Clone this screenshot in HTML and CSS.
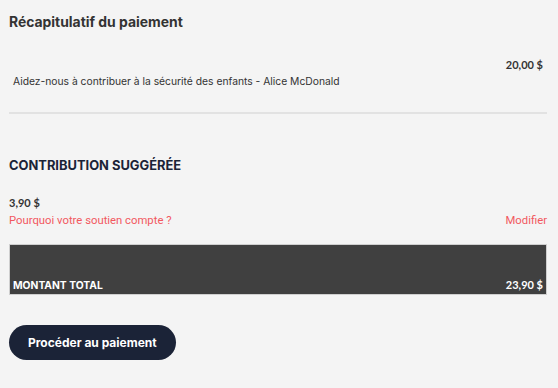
FILE: index.html
```html
<!DOCTYPE html>
<html lang="fr">
<head>
<meta charset="utf-8">
<link rel="stylesheet" href="styles.css">
</head>
<body>
<div class="page">
  <h2 class="title">Récapitulatif du paiement</h2>
  <div class="item">
    <div class="item-amount">20,00 $</div>
    <div class="item-desc">Aidez-nous à contribuer à la sécurité des enfants - Alice McDonald</div>
  </div>
  <hr class="divider">
  <h3 class="section">CONTRIBUTION SUGGÉRÉE</h3>
  <div class="tip-amount">3,90 $</div>
  <div class="tip-links">
    <a class="link">Pourquoi votre soutien compte ?</a>
    <a class="link">Modifier</a>
  </div>
  <div class="total">
    <span class="total-label">MONTANT TOTAL</span>
    <span class="total-amount">23,90 $</span>
  </div>
  <button class="pay">Procéder au paiement</button>
</div>
</body>
</html>
```
FILE: styles.css
```css
html, body {
  margin: 0;
  padding: 0;
  background: #f4f4f4;
}
.page {
  padding: 0 11px 0 9px;
  font-family: Inter, sans-serif;
  color: #333;
}
.title {
  margin: 0;
  padding-top: 14px;
  font-size: 13.9px;
  font-weight: 700;
  line-height: 17px;
  color: #333;
}
.item {
  display: flex;
  flex-direction: column;
  padding: 0 4px;
  margin-top: 27px;
}
.item-amount {
  align-self: flex-end;
  font-family: Lato, sans-serif;
  font-weight: 700;
  font-size: 11px;
  line-height: 14px;
  color: #333;
}
.item-desc {
  margin-top: 2px;
  font-size: 10.3px;
  line-height: 14px;
  color: #333;
}
.divider {
  margin: 24px 0 0;
  border: 0;
  height: 2px;
  background: #e2e2e2;
}
.section {
  margin: 43px 0 0;
  font-size: 12.9px;
  font-weight: 700;
  line-height: 17px;
  color: #1b2337;
  letter-spacing: 0;
}
.tip-amount {
  margin-top: 22px;
  font-family: Lato, sans-serif;
  font-weight: 700;
  font-size: 11px;
  line-height: 14px;
  color: #333;
}
.tip-links {
  display: flex;
  justify-content: space-between;
  margin-top: 3px;
  font-family: Roboto, sans-serif;
  font-size: 11.3px;
  line-height: 15px;
  color: #f2585f;
}
.total {
  margin-top: 16px;
  height: 51px;
  box-sizing: border-box;
  background: #404040;
  border: 1px solid #cfcfcf;
  display: flex;
  justify-content: space-between;
  align-items: flex-end;
  padding: 0 3px 2px 3px;
  color: #fff;
  font-size: 10.3px;
  font-weight: 700;
  line-height: 14px;
}
.total-amount {
  font-family: Lato, sans-serif;
  font-size: 11px;
}
.pay {
  margin-top: 30px;
  height: 35px;
  padding: 0 19px;
  border: 0;
  border-radius: 18px;
  background: #1b2337;
  color: #fff;
  font-family: Inter, sans-serif;
  font-size: 12px;
  font-weight: 700;
}
```
